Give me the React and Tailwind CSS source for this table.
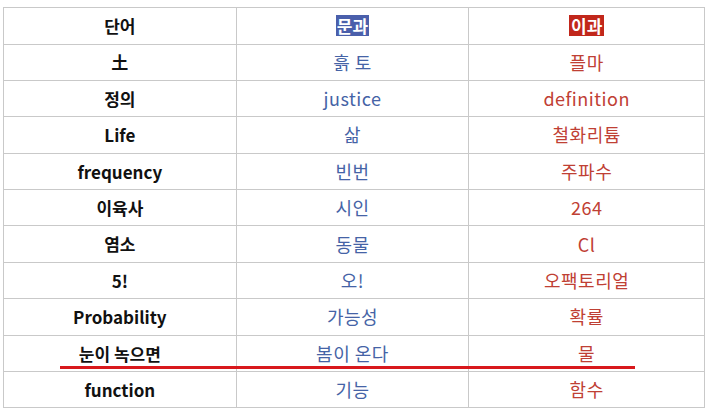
const rows = [
  ["土", "흙 토", "플마"],
  ["정의", "justice", "definition"],
  ["Life", "삶", "철화리튬"],
  ["frequency", "빈번", "주파수"],
  ["이육사", "시인", "264"],
  ["염소", "동물", "Cl"],
  ["5!", "오!", "오팩토리얼"],
  ["Probability", "가능성", "확률"],
  ["눈이 녹으면", "봄이 온다", "물"],
  ["function", "기능", "함수"],
];

export default function App() {
  return (
    <div
      className="relative w-[710px] h-[412px] bg-white pt-[7px] pl-[3px]"
      style={{ fontFamily: '"Noto Sans CJK KR", "Noto Sans", sans-serif' }}
    >
      <table className="border-collapse w-[702px] text-[17px] text-center">
        <colgroup>
          <col className="w-[233px]" />
          <col className="w-[233px]" />
          <col className="w-[236px]" />
        </colgroup>
        <tbody>
          <tr className="h-[36.5px]">
            <td className="border border-[#c9c9c9] font-bold text-[#111]">단어</td>
            <td className="border border-[#c9c9c9]">
              <span className="bg-[#4a5fab] text-white font-bold px-[1px] leading-[21px] inline-block">문과</span>
            </td>
            <td className="border border-[#c9c9c9]">
              <span className="bg-[#c1271b] text-white font-bold px-[2px] leading-[21px] inline-block">이과</span>
            </td>
          </tr>
          {rows.map((r, i) => (
            <tr key={i} className="h-[36.4px]">
              <td className="border border-[#c9c9c9] font-bold text-[#111]">{r[0]}</td>
              <td className="border border-[#c9c9c9] text-[#4563a6] text-[18px] tracking-[0.5px]">{r[1]}</td>
              <td className="border border-[#c9c9c9] text-[#bf4034] text-[18px] tracking-[0.5px]">{r[2]}</td>
            </tr>
          ))}
        </tbody>
      </table>
      <div className="absolute left-[60px] top-[366px] w-[575px] h-[3px] bg-[#d8181c]" />
    </div>
  );
}
